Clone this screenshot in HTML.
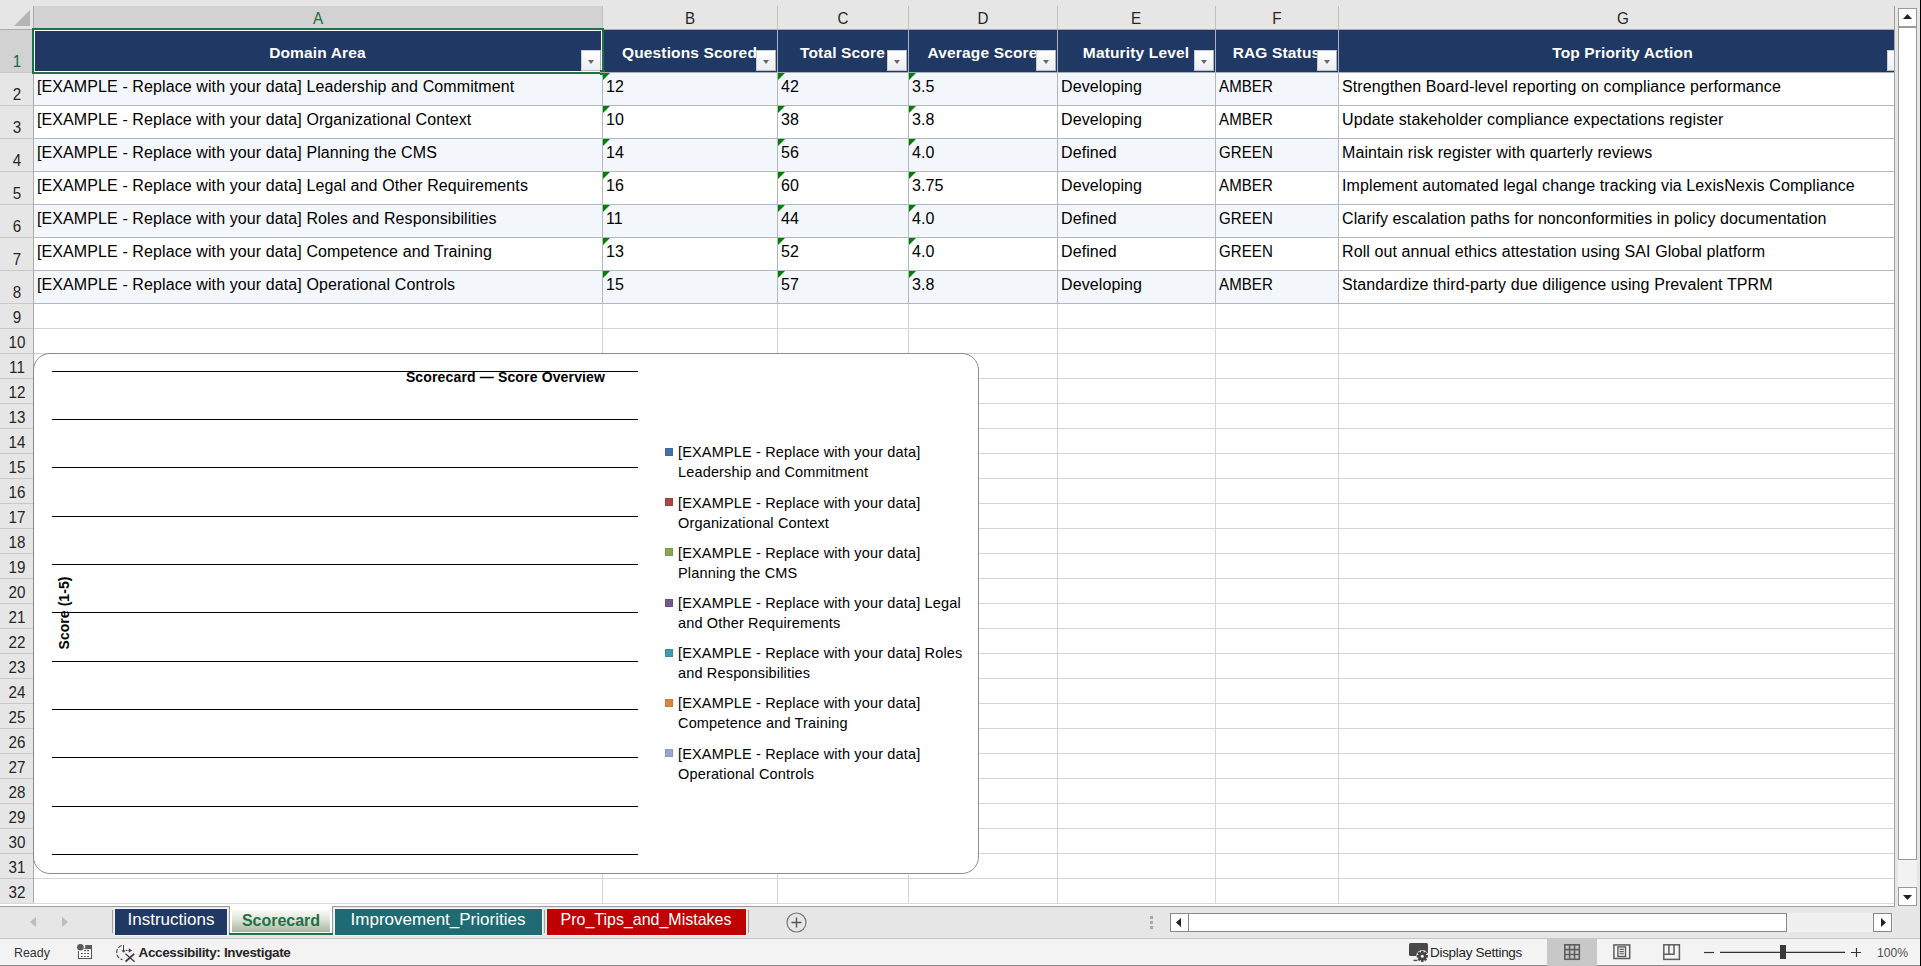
<!DOCTYPE html>
<html><head><meta charset="utf-8"><style>
html,body{margin:0;padding:0;}
body{width:1921px;height:966px;overflow:hidden;position:relative;font-family:"Liberation Sans",sans-serif;background:#fff;}
.r,.t{position:absolute;}
.t{white-space:nowrap;}
.dd{background:linear-gradient(#fff,#ECEEF2);border:1px solid #C9CCD2;border-right-color:#A9B0BC;border-bottom-color:#B9BEC8;box-sizing:border-box;}
.dd:after{content:"";position:absolute;left:5.5px;top:8.5px;border-left:3.7px solid transparent;border-right:3.7px solid transparent;border-top:4.2px solid #666;}
</style></head><body>
<div class="r" style="left:0px;top:0px;width:1921px;height:966px;background:#fff;"></div>
<div class="r" style="left:0px;top:0px;width:1921px;height:29px;background:#E6E6E6;"></div>
<div class="r" style="left:33px;top:6px;width:569px;height:23px;background:#D2D2D2;"></div>
<div class="r" style="left:0px;top:29px;width:33px;height:874px;background:#E6E6E6;"></div>
<div class="r" style="left:0px;top:30px;width:33px;height:42px;background:#D2D2D2;"></div>
<svg class="r" style="left:0;top:0" width="33" height="29"><polygon points="30,10 30,26 14,26" fill="#B4B4B4"/></svg>
<div class="r" style="left:602px;top:6px;width:1px;height:23px;background:#BFBFBF;"></div>
<div class="r" style="left:777px;top:6px;width:1px;height:23px;background:#BFBFBF;"></div>
<div class="r" style="left:908px;top:6px;width:1px;height:23px;background:#BFBFBF;"></div>
<div class="r" style="left:1057px;top:6px;width:1px;height:23px;background:#BFBFBF;"></div>
<div class="r" style="left:1215px;top:6px;width:1px;height:23px;background:#BFBFBF;"></div>
<div class="r" style="left:1338px;top:6px;width:1px;height:23px;background:#BFBFBF;"></div>
<div class="r" style="left:33px;top:6px;width:1px;height:23px;background:#ABABAB;"></div>
<div class="r" style="left:0px;top:29px;width:1894px;height:1px;background:#ABABAB;"></div>
<div class="t" style="left:-82.5px;width:800px;text-align:center;top:9.07px;font-size:16.5px;line-height:18.43px;color:#1E6B3A;transform:scaleX(0.92);transform-origin:50% 0;">A</div>
<div class="t" style="left:289.5px;width:800px;text-align:center;top:9.07px;font-size:16.5px;line-height:18.43px;color:#262626;transform:scaleX(0.92);transform-origin:50% 0;">B</div>
<div class="t" style="left:442.5px;width:800px;text-align:center;top:9.07px;font-size:16.5px;line-height:18.43px;color:#262626;transform:scaleX(0.92);transform-origin:50% 0;">C</div>
<div class="t" style="left:582.5px;width:800px;text-align:center;top:9.07px;font-size:16.5px;line-height:18.43px;color:#262626;transform:scaleX(0.92);transform-origin:50% 0;">D</div>
<div class="t" style="left:736.0px;width:800px;text-align:center;top:9.07px;font-size:16.5px;line-height:18.43px;color:#262626;transform:scaleX(0.92);transform-origin:50% 0;">E</div>
<div class="t" style="left:876.5px;width:800px;text-align:center;top:9.07px;font-size:16.5px;line-height:18.43px;color:#262626;transform:scaleX(0.92);transform-origin:50% 0;">F</div>
<div class="t" style="left:1222.5px;width:800px;text-align:center;top:9.07px;font-size:16.5px;line-height:18.43px;color:#262626;transform:scaleX(0.92);transform-origin:50% 0;">G</div>
<div class="r" style="left:33px;top:29px;width:1px;height:874px;background:#ABABAB;"></div>
<div class="t" style="left:-383px;width:800px;text-align:center;top:52.47px;font-size:16.5px;line-height:18.43px;color:#1E6B3A;transform:scaleX(0.92);transform-origin:50% 0;">1</div>
<div class="r" style="left:0px;top:72px;width:33px;height:1px;background:#C8C8C8;"></div>
<div class="t" style="left:-383px;width:800px;text-align:center;top:85.47px;font-size:16.5px;line-height:18.43px;color:#262626;transform:scaleX(0.92);transform-origin:50% 0;">2</div>
<div class="r" style="left:0px;top:105px;width:33px;height:1px;background:#C8C8C8;"></div>
<div class="t" style="left:-383px;width:800px;text-align:center;top:118.47px;font-size:16.5px;line-height:18.43px;color:#262626;transform:scaleX(0.92);transform-origin:50% 0;">3</div>
<div class="r" style="left:0px;top:138px;width:33px;height:1px;background:#C8C8C8;"></div>
<div class="t" style="left:-383px;width:800px;text-align:center;top:151.47px;font-size:16.5px;line-height:18.43px;color:#262626;transform:scaleX(0.92);transform-origin:50% 0;">4</div>
<div class="r" style="left:0px;top:171px;width:33px;height:1px;background:#C8C8C8;"></div>
<div class="t" style="left:-383px;width:800px;text-align:center;top:184.47px;font-size:16.5px;line-height:18.43px;color:#262626;transform:scaleX(0.92);transform-origin:50% 0;">5</div>
<div class="r" style="left:0px;top:204px;width:33px;height:1px;background:#C8C8C8;"></div>
<div class="t" style="left:-383px;width:800px;text-align:center;top:217.47px;font-size:16.5px;line-height:18.43px;color:#262626;transform:scaleX(0.92);transform-origin:50% 0;">6</div>
<div class="r" style="left:0px;top:237px;width:33px;height:1px;background:#C8C8C8;"></div>
<div class="t" style="left:-383px;width:800px;text-align:center;top:250.47px;font-size:16.5px;line-height:18.43px;color:#262626;transform:scaleX(0.92);transform-origin:50% 0;">7</div>
<div class="r" style="left:0px;top:270px;width:33px;height:1px;background:#C8C8C8;"></div>
<div class="t" style="left:-383px;width:800px;text-align:center;top:283.47px;font-size:16.5px;line-height:18.43px;color:#262626;transform:scaleX(0.92);transform-origin:50% 0;">8</div>
<div class="r" style="left:0px;top:303px;width:33px;height:1px;background:#C8C8C8;"></div>
<div class="t" style="left:-383px;width:800px;text-align:center;top:308.47px;font-size:16.5px;line-height:18.43px;color:#262626;transform:scaleX(0.92);transform-origin:50% 0;">9</div>
<div class="r" style="left:0px;top:328px;width:33px;height:1px;background:#C8C8C8;"></div>
<div class="t" style="left:-383px;width:800px;text-align:center;top:333.47px;font-size:16.5px;line-height:18.43px;color:#262626;transform:scaleX(0.92);transform-origin:50% 0;">10</div>
<div class="r" style="left:0px;top:353px;width:33px;height:1px;background:#C8C8C8;"></div>
<div class="t" style="left:-383px;width:800px;text-align:center;top:358.47px;font-size:16.5px;line-height:18.43px;color:#262626;transform:scaleX(0.92);transform-origin:50% 0;">11</div>
<div class="r" style="left:0px;top:378px;width:33px;height:1px;background:#C8C8C8;"></div>
<div class="t" style="left:-383px;width:800px;text-align:center;top:383.47px;font-size:16.5px;line-height:18.43px;color:#262626;transform:scaleX(0.92);transform-origin:50% 0;">12</div>
<div class="r" style="left:0px;top:403px;width:33px;height:1px;background:#C8C8C8;"></div>
<div class="t" style="left:-383px;width:800px;text-align:center;top:408.47px;font-size:16.5px;line-height:18.43px;color:#262626;transform:scaleX(0.92);transform-origin:50% 0;">13</div>
<div class="r" style="left:0px;top:428px;width:33px;height:1px;background:#C8C8C8;"></div>
<div class="t" style="left:-383px;width:800px;text-align:center;top:433.47px;font-size:16.5px;line-height:18.43px;color:#262626;transform:scaleX(0.92);transform-origin:50% 0;">14</div>
<div class="r" style="left:0px;top:453px;width:33px;height:1px;background:#C8C8C8;"></div>
<div class="t" style="left:-383px;width:800px;text-align:center;top:458.47px;font-size:16.5px;line-height:18.43px;color:#262626;transform:scaleX(0.92);transform-origin:50% 0;">15</div>
<div class="r" style="left:0px;top:478px;width:33px;height:1px;background:#C8C8C8;"></div>
<div class="t" style="left:-383px;width:800px;text-align:center;top:483.47px;font-size:16.5px;line-height:18.43px;color:#262626;transform:scaleX(0.92);transform-origin:50% 0;">16</div>
<div class="r" style="left:0px;top:503px;width:33px;height:1px;background:#C8C8C8;"></div>
<div class="t" style="left:-383px;width:800px;text-align:center;top:508.47px;font-size:16.5px;line-height:18.43px;color:#262626;transform:scaleX(0.92);transform-origin:50% 0;">17</div>
<div class="r" style="left:0px;top:528px;width:33px;height:1px;background:#C8C8C8;"></div>
<div class="t" style="left:-383px;width:800px;text-align:center;top:533.47px;font-size:16.5px;line-height:18.43px;color:#262626;transform:scaleX(0.92);transform-origin:50% 0;">18</div>
<div class="r" style="left:0px;top:553px;width:33px;height:1px;background:#C8C8C8;"></div>
<div class="t" style="left:-383px;width:800px;text-align:center;top:558.47px;font-size:16.5px;line-height:18.43px;color:#262626;transform:scaleX(0.92);transform-origin:50% 0;">19</div>
<div class="r" style="left:0px;top:578px;width:33px;height:1px;background:#C8C8C8;"></div>
<div class="t" style="left:-383px;width:800px;text-align:center;top:583.47px;font-size:16.5px;line-height:18.43px;color:#262626;transform:scaleX(0.92);transform-origin:50% 0;">20</div>
<div class="r" style="left:0px;top:603px;width:33px;height:1px;background:#C8C8C8;"></div>
<div class="t" style="left:-383px;width:800px;text-align:center;top:608.47px;font-size:16.5px;line-height:18.43px;color:#262626;transform:scaleX(0.92);transform-origin:50% 0;">21</div>
<div class="r" style="left:0px;top:628px;width:33px;height:1px;background:#C8C8C8;"></div>
<div class="t" style="left:-383px;width:800px;text-align:center;top:633.47px;font-size:16.5px;line-height:18.43px;color:#262626;transform:scaleX(0.92);transform-origin:50% 0;">22</div>
<div class="r" style="left:0px;top:653px;width:33px;height:1px;background:#C8C8C8;"></div>
<div class="t" style="left:-383px;width:800px;text-align:center;top:658.47px;font-size:16.5px;line-height:18.43px;color:#262626;transform:scaleX(0.92);transform-origin:50% 0;">23</div>
<div class="r" style="left:0px;top:678px;width:33px;height:1px;background:#C8C8C8;"></div>
<div class="t" style="left:-383px;width:800px;text-align:center;top:683.47px;font-size:16.5px;line-height:18.43px;color:#262626;transform:scaleX(0.92);transform-origin:50% 0;">24</div>
<div class="r" style="left:0px;top:703px;width:33px;height:1px;background:#C8C8C8;"></div>
<div class="t" style="left:-383px;width:800px;text-align:center;top:708.47px;font-size:16.5px;line-height:18.43px;color:#262626;transform:scaleX(0.92);transform-origin:50% 0;">25</div>
<div class="r" style="left:0px;top:728px;width:33px;height:1px;background:#C8C8C8;"></div>
<div class="t" style="left:-383px;width:800px;text-align:center;top:733.47px;font-size:16.5px;line-height:18.43px;color:#262626;transform:scaleX(0.92);transform-origin:50% 0;">26</div>
<div class="r" style="left:0px;top:753px;width:33px;height:1px;background:#C8C8C8;"></div>
<div class="t" style="left:-383px;width:800px;text-align:center;top:758.47px;font-size:16.5px;line-height:18.43px;color:#262626;transform:scaleX(0.92);transform-origin:50% 0;">27</div>
<div class="r" style="left:0px;top:778px;width:33px;height:1px;background:#C8C8C8;"></div>
<div class="t" style="left:-383px;width:800px;text-align:center;top:783.47px;font-size:16.5px;line-height:18.43px;color:#262626;transform:scaleX(0.92);transform-origin:50% 0;">28</div>
<div class="r" style="left:0px;top:803px;width:33px;height:1px;background:#C8C8C8;"></div>
<div class="t" style="left:-383px;width:800px;text-align:center;top:808.47px;font-size:16.5px;line-height:18.43px;color:#262626;transform:scaleX(0.92);transform-origin:50% 0;">29</div>
<div class="r" style="left:0px;top:828px;width:33px;height:1px;background:#C8C8C8;"></div>
<div class="t" style="left:-383px;width:800px;text-align:center;top:833.47px;font-size:16.5px;line-height:18.43px;color:#262626;transform:scaleX(0.92);transform-origin:50% 0;">30</div>
<div class="r" style="left:0px;top:853px;width:33px;height:1px;background:#C8C8C8;"></div>
<div class="t" style="left:-383px;width:800px;text-align:center;top:858.47px;font-size:16.5px;line-height:18.43px;color:#262626;transform:scaleX(0.92);transform-origin:50% 0;">31</div>
<div class="r" style="left:0px;top:878px;width:33px;height:1px;background:#C8C8C8;"></div>
<div class="t" style="left:-383px;width:800px;text-align:center;top:883.47px;font-size:16.5px;line-height:18.43px;color:#262626;transform:scaleX(0.92);transform-origin:50% 0;">32</div>
<div class="r" style="left:0px;top:903px;width:33px;height:1px;background:#C8C8C8;"></div>
<div class="r" style="left:34px;top:328px;width:1860px;height:1px;background:#D4D4D4;"></div>
<div class="r" style="left:34px;top:353px;width:1860px;height:1px;background:#D4D4D4;"></div>
<div class="r" style="left:34px;top:378px;width:1860px;height:1px;background:#D4D4D4;"></div>
<div class="r" style="left:34px;top:403px;width:1860px;height:1px;background:#D4D4D4;"></div>
<div class="r" style="left:34px;top:428px;width:1860px;height:1px;background:#D4D4D4;"></div>
<div class="r" style="left:34px;top:453px;width:1860px;height:1px;background:#D4D4D4;"></div>
<div class="r" style="left:34px;top:478px;width:1860px;height:1px;background:#D4D4D4;"></div>
<div class="r" style="left:34px;top:503px;width:1860px;height:1px;background:#D4D4D4;"></div>
<div class="r" style="left:34px;top:528px;width:1860px;height:1px;background:#D4D4D4;"></div>
<div class="r" style="left:34px;top:553px;width:1860px;height:1px;background:#D4D4D4;"></div>
<div class="r" style="left:34px;top:578px;width:1860px;height:1px;background:#D4D4D4;"></div>
<div class="r" style="left:34px;top:603px;width:1860px;height:1px;background:#D4D4D4;"></div>
<div class="r" style="left:34px;top:628px;width:1860px;height:1px;background:#D4D4D4;"></div>
<div class="r" style="left:34px;top:653px;width:1860px;height:1px;background:#D4D4D4;"></div>
<div class="r" style="left:34px;top:678px;width:1860px;height:1px;background:#D4D4D4;"></div>
<div class="r" style="left:34px;top:703px;width:1860px;height:1px;background:#D4D4D4;"></div>
<div class="r" style="left:34px;top:728px;width:1860px;height:1px;background:#D4D4D4;"></div>
<div class="r" style="left:34px;top:753px;width:1860px;height:1px;background:#D4D4D4;"></div>
<div class="r" style="left:34px;top:778px;width:1860px;height:1px;background:#D4D4D4;"></div>
<div class="r" style="left:34px;top:803px;width:1860px;height:1px;background:#D4D4D4;"></div>
<div class="r" style="left:34px;top:828px;width:1860px;height:1px;background:#D4D4D4;"></div>
<div class="r" style="left:34px;top:853px;width:1860px;height:1px;background:#D4D4D4;"></div>
<div class="r" style="left:34px;top:878px;width:1860px;height:1px;background:#D4D4D4;"></div>
<div class="r" style="left:34px;top:903px;width:1860px;height:1px;background:#D4D4D4;"></div>
<div class="r" style="left:602px;top:303px;width:1px;height:600px;background:#D4D4D4;"></div>
<div class="r" style="left:777px;top:303px;width:1px;height:600px;background:#D4D4D4;"></div>
<div class="r" style="left:908px;top:303px;width:1px;height:600px;background:#D4D4D4;"></div>
<div class="r" style="left:1057px;top:303px;width:1px;height:600px;background:#D4D4D4;"></div>
<div class="r" style="left:1215px;top:303px;width:1px;height:600px;background:#D4D4D4;"></div>
<div class="r" style="left:1338px;top:303px;width:1px;height:600px;background:#D4D4D4;"></div>
<div class="r" style="left:34px;top:30px;width:1860px;height:42px;background:#203864;"></div>
<div class="r" style="left:34px;top:72px;width:1860px;height:1px;background:#A6AEBB;"></div>
<div class="r" style="left:602px;top:30px;width:1px;height:42px;background:#A9B1BE;"></div>
<div class="r" style="left:777px;top:30px;width:1px;height:42px;background:#A9B1BE;"></div>
<div class="r" style="left:908px;top:30px;width:1px;height:42px;background:#A9B1BE;"></div>
<div class="r" style="left:1057px;top:30px;width:1px;height:42px;background:#A9B1BE;"></div>
<div class="r" style="left:1215px;top:30px;width:1px;height:42px;background:#A9B1BE;"></div>
<div class="r" style="left:1338px;top:30px;width:1px;height:42px;background:#A9B1BE;"></div>
<div class="r" style="left:34px;top:73px;width:1304px;height:32px;background:#F3F6FB;"></div>
<div class="r" style="left:34px;top:105px;width:1860px;height:1px;background:#B0B8C4;"></div>
<div class="t" style="left:37px;top:77.52px;font-size:16px;line-height:17.87px;color:#000;letter-spacing:0.1px;">[EXAMPLE - Replace with your data] Leadership and Commitment</div>
<div class="t" style="left:606px;top:77.52px;font-size:16px;line-height:17.87px;color:#000;letter-spacing:0.1px;">12</div>
<svg class="r" style="left:603px;top:73px" width="8" height="8"><polygon points="0,0 7,0 0,7" fill="#008000"/></svg>
<div class="t" style="left:781px;top:77.52px;font-size:16px;line-height:17.87px;color:#000;letter-spacing:0.1px;">42</div>
<svg class="r" style="left:778px;top:73px" width="8" height="8"><polygon points="0,0 7,0 0,7" fill="#008000"/></svg>
<div class="t" style="left:912px;top:77.52px;font-size:16px;line-height:17.87px;color:#000;letter-spacing:0.1px;">3.5</div>
<svg class="r" style="left:909px;top:73px" width="8" height="8"><polygon points="0,0 7,0 0,7" fill="#008000"/></svg>
<div class="t" style="left:1061px;top:77.52px;font-size:16px;line-height:17.87px;color:#000;letter-spacing:0.1px;">Developing</div>
<div class="t" style="left:1219px;top:77.52px;font-size:16px;line-height:17.87px;color:#000;letter-spacing:0.1px;transform:scaleX(0.94);transform-origin:0 0;">AMBER</div>
<div class="t" style="left:1342px;top:77.52px;font-size:16px;line-height:17.87px;color:#000;letter-spacing:0.1px;">Strengthen Board-level reporting on compliance performance</div>
<div class="r" style="left:34px;top:106px;width:1304px;height:32px;background:#FFFFFF;"></div>
<div class="r" style="left:34px;top:138px;width:1860px;height:1px;background:#B0B8C4;"></div>
<div class="t" style="left:37px;top:110.52px;font-size:16px;line-height:17.87px;color:#000;letter-spacing:0.1px;">[EXAMPLE - Replace with your data] Organizational Context</div>
<div class="t" style="left:606px;top:110.52px;font-size:16px;line-height:17.87px;color:#000;letter-spacing:0.1px;">10</div>
<svg class="r" style="left:603px;top:106px" width="8" height="8"><polygon points="0,0 7,0 0,7" fill="#008000"/></svg>
<div class="t" style="left:781px;top:110.52px;font-size:16px;line-height:17.87px;color:#000;letter-spacing:0.1px;">38</div>
<svg class="r" style="left:778px;top:106px" width="8" height="8"><polygon points="0,0 7,0 0,7" fill="#008000"/></svg>
<div class="t" style="left:912px;top:110.52px;font-size:16px;line-height:17.87px;color:#000;letter-spacing:0.1px;">3.8</div>
<svg class="r" style="left:909px;top:106px" width="8" height="8"><polygon points="0,0 7,0 0,7" fill="#008000"/></svg>
<div class="t" style="left:1061px;top:110.52px;font-size:16px;line-height:17.87px;color:#000;letter-spacing:0.1px;">Developing</div>
<div class="t" style="left:1219px;top:110.52px;font-size:16px;line-height:17.87px;color:#000;letter-spacing:0.1px;transform:scaleX(0.94);transform-origin:0 0;">AMBER</div>
<div class="t" style="left:1342px;top:110.52px;font-size:16px;line-height:17.87px;color:#000;letter-spacing:0.1px;">Update stakeholder compliance expectations register</div>
<div class="r" style="left:34px;top:139px;width:1304px;height:32px;background:#F3F6FB;"></div>
<div class="r" style="left:34px;top:171px;width:1860px;height:1px;background:#B0B8C4;"></div>
<div class="t" style="left:37px;top:143.52px;font-size:16px;line-height:17.87px;color:#000;letter-spacing:0.1px;">[EXAMPLE - Replace with your data] Planning the CMS</div>
<div class="t" style="left:606px;top:143.52px;font-size:16px;line-height:17.87px;color:#000;letter-spacing:0.1px;">14</div>
<svg class="r" style="left:603px;top:139px" width="8" height="8"><polygon points="0,0 7,0 0,7" fill="#008000"/></svg>
<div class="t" style="left:781px;top:143.52px;font-size:16px;line-height:17.87px;color:#000;letter-spacing:0.1px;">56</div>
<svg class="r" style="left:778px;top:139px" width="8" height="8"><polygon points="0,0 7,0 0,7" fill="#008000"/></svg>
<div class="t" style="left:912px;top:143.52px;font-size:16px;line-height:17.87px;color:#000;letter-spacing:0.1px;">4.0</div>
<svg class="r" style="left:909px;top:139px" width="8" height="8"><polygon points="0,0 7,0 0,7" fill="#008000"/></svg>
<div class="t" style="left:1061px;top:143.52px;font-size:16px;line-height:17.87px;color:#000;letter-spacing:0.1px;">Defined</div>
<div class="t" style="left:1219px;top:143.52px;font-size:16px;line-height:17.87px;color:#000;letter-spacing:0.1px;transform:scaleX(0.94);transform-origin:0 0;">GREEN</div>
<div class="t" style="left:1342px;top:143.52px;font-size:16px;line-height:17.87px;color:#000;letter-spacing:0.1px;">Maintain risk register with quarterly reviews</div>
<div class="r" style="left:34px;top:172px;width:1304px;height:32px;background:#FFFFFF;"></div>
<div class="r" style="left:34px;top:204px;width:1860px;height:1px;background:#B0B8C4;"></div>
<div class="t" style="left:37px;top:176.52px;font-size:16px;line-height:17.87px;color:#000;letter-spacing:0.1px;">[EXAMPLE - Replace with your data] Legal and Other Requirements</div>
<div class="t" style="left:606px;top:176.52px;font-size:16px;line-height:17.87px;color:#000;letter-spacing:0.1px;">16</div>
<svg class="r" style="left:603px;top:172px" width="8" height="8"><polygon points="0,0 7,0 0,7" fill="#008000"/></svg>
<div class="t" style="left:781px;top:176.52px;font-size:16px;line-height:17.87px;color:#000;letter-spacing:0.1px;">60</div>
<svg class="r" style="left:778px;top:172px" width="8" height="8"><polygon points="0,0 7,0 0,7" fill="#008000"/></svg>
<div class="t" style="left:912px;top:176.52px;font-size:16px;line-height:17.87px;color:#000;letter-spacing:0.1px;">3.75</div>
<svg class="r" style="left:909px;top:172px" width="8" height="8"><polygon points="0,0 7,0 0,7" fill="#008000"/></svg>
<div class="t" style="left:1061px;top:176.52px;font-size:16px;line-height:17.87px;color:#000;letter-spacing:0.1px;">Developing</div>
<div class="t" style="left:1219px;top:176.52px;font-size:16px;line-height:17.87px;color:#000;letter-spacing:0.1px;transform:scaleX(0.94);transform-origin:0 0;">AMBER</div>
<div class="t" style="left:1342px;top:176.52px;font-size:16px;line-height:17.87px;color:#000;letter-spacing:0.1px;">Implement automated legal change tracking via LexisNexis Compliance</div>
<div class="r" style="left:34px;top:205px;width:1304px;height:32px;background:#F3F6FB;"></div>
<div class="r" style="left:34px;top:237px;width:1860px;height:1px;background:#B0B8C4;"></div>
<div class="t" style="left:37px;top:209.52px;font-size:16px;line-height:17.87px;color:#000;letter-spacing:0.1px;">[EXAMPLE - Replace with your data] Roles and Responsibilities</div>
<div class="t" style="left:606px;top:209.52px;font-size:16px;line-height:17.87px;color:#000;letter-spacing:0.1px;">11</div>
<svg class="r" style="left:603px;top:205px" width="8" height="8"><polygon points="0,0 7,0 0,7" fill="#008000"/></svg>
<div class="t" style="left:781px;top:209.52px;font-size:16px;line-height:17.87px;color:#000;letter-spacing:0.1px;">44</div>
<svg class="r" style="left:778px;top:205px" width="8" height="8"><polygon points="0,0 7,0 0,7" fill="#008000"/></svg>
<div class="t" style="left:912px;top:209.52px;font-size:16px;line-height:17.87px;color:#000;letter-spacing:0.1px;">4.0</div>
<svg class="r" style="left:909px;top:205px" width="8" height="8"><polygon points="0,0 7,0 0,7" fill="#008000"/></svg>
<div class="t" style="left:1061px;top:209.52px;font-size:16px;line-height:17.87px;color:#000;letter-spacing:0.1px;">Defined</div>
<div class="t" style="left:1219px;top:209.52px;font-size:16px;line-height:17.87px;color:#000;letter-spacing:0.1px;transform:scaleX(0.94);transform-origin:0 0;">GREEN</div>
<div class="t" style="left:1342px;top:209.52px;font-size:16px;line-height:17.87px;color:#000;letter-spacing:0.1px;">Clarify escalation paths for nonconformities in policy documentation</div>
<div class="r" style="left:34px;top:238px;width:1304px;height:32px;background:#FFFFFF;"></div>
<div class="r" style="left:34px;top:270px;width:1860px;height:1px;background:#B0B8C4;"></div>
<div class="t" style="left:37px;top:242.52px;font-size:16px;line-height:17.87px;color:#000;letter-spacing:0.1px;">[EXAMPLE - Replace with your data] Competence and Training</div>
<div class="t" style="left:606px;top:242.52px;font-size:16px;line-height:17.87px;color:#000;letter-spacing:0.1px;">13</div>
<svg class="r" style="left:603px;top:238px" width="8" height="8"><polygon points="0,0 7,0 0,7" fill="#008000"/></svg>
<div class="t" style="left:781px;top:242.52px;font-size:16px;line-height:17.87px;color:#000;letter-spacing:0.1px;">52</div>
<svg class="r" style="left:778px;top:238px" width="8" height="8"><polygon points="0,0 7,0 0,7" fill="#008000"/></svg>
<div class="t" style="left:912px;top:242.52px;font-size:16px;line-height:17.87px;color:#000;letter-spacing:0.1px;">4.0</div>
<svg class="r" style="left:909px;top:238px" width="8" height="8"><polygon points="0,0 7,0 0,7" fill="#008000"/></svg>
<div class="t" style="left:1061px;top:242.52px;font-size:16px;line-height:17.87px;color:#000;letter-spacing:0.1px;">Defined</div>
<div class="t" style="left:1219px;top:242.52px;font-size:16px;line-height:17.87px;color:#000;letter-spacing:0.1px;transform:scaleX(0.94);transform-origin:0 0;">GREEN</div>
<div class="t" style="left:1342px;top:242.52px;font-size:16px;line-height:17.87px;color:#000;letter-spacing:0.1px;">Roll out annual ethics attestation using SAI Global platform</div>
<div class="r" style="left:34px;top:271px;width:1304px;height:32px;background:#F3F6FB;"></div>
<div class="r" style="left:34px;top:303px;width:1860px;height:1px;background:#B0B8C4;"></div>
<div class="t" style="left:37px;top:275.52px;font-size:16px;line-height:17.87px;color:#000;letter-spacing:0.1px;">[EXAMPLE - Replace with your data] Operational Controls</div>
<div class="t" style="left:606px;top:275.52px;font-size:16px;line-height:17.87px;color:#000;letter-spacing:0.1px;">15</div>
<svg class="r" style="left:603px;top:271px" width="8" height="8"><polygon points="0,0 7,0 0,7" fill="#008000"/></svg>
<div class="t" style="left:781px;top:275.52px;font-size:16px;line-height:17.87px;color:#000;letter-spacing:0.1px;">57</div>
<svg class="r" style="left:778px;top:271px" width="8" height="8"><polygon points="0,0 7,0 0,7" fill="#008000"/></svg>
<div class="t" style="left:912px;top:275.52px;font-size:16px;line-height:17.87px;color:#000;letter-spacing:0.1px;">3.8</div>
<svg class="r" style="left:909px;top:271px" width="8" height="8"><polygon points="0,0 7,0 0,7" fill="#008000"/></svg>
<div class="t" style="left:1061px;top:275.52px;font-size:16px;line-height:17.87px;color:#000;letter-spacing:0.1px;">Developing</div>
<div class="t" style="left:1219px;top:275.52px;font-size:16px;line-height:17.87px;color:#000;letter-spacing:0.1px;transform:scaleX(0.94);transform-origin:0 0;">AMBER</div>
<div class="t" style="left:1342px;top:275.52px;font-size:16px;line-height:17.87px;color:#000;letter-spacing:0.1px;">Standardize third-party due diligence using Prevalent TPRM</div>
<div class="r" style="left:602px;top:72px;width:1px;height:231px;background:#B0B8C4;"></div>
<div class="r" style="left:777px;top:72px;width:1px;height:231px;background:#B0B8C4;"></div>
<div class="r" style="left:908px;top:72px;width:1px;height:231px;background:#B0B8C4;"></div>
<div class="r" style="left:1057px;top:72px;width:1px;height:231px;background:#B0B8C4;"></div>
<div class="r" style="left:1215px;top:72px;width:1px;height:231px;background:#B0B8C4;"></div>
<div class="r" style="left:1338px;top:72px;width:1px;height:231px;background:#B0B8C4;"></div>
<div class="r" style="left:1894px;top:29px;width:1px;height:274px;background:#B0B8C4;"></div>
<div class="t" style="left:-82.5px;width:800px;text-align:center;top:43.97px;font-size:15.5px;line-height:17.31px;color:#fff;font-weight:bold;letter-spacing:0.15px;">Domain Area</div>
<div class="t" style="left:289.5px;width:800px;text-align:center;top:43.97px;font-size:15.5px;line-height:17.31px;color:#fff;font-weight:bold;letter-spacing:0.15px;">Questions Scored</div>
<div class="t" style="left:442.5px;width:800px;text-align:center;top:43.97px;font-size:15.5px;line-height:17.31px;color:#fff;font-weight:bold;letter-spacing:0.15px;">Total Score</div>
<div class="t" style="left:582.5px;width:800px;text-align:center;top:43.97px;font-size:15.5px;line-height:17.31px;color:#fff;font-weight:bold;letter-spacing:0.15px;">Average Score</div>
<div class="t" style="left:736.0px;width:800px;text-align:center;top:43.97px;font-size:15.5px;line-height:17.31px;color:#fff;font-weight:bold;letter-spacing:0.15px;">Maturity Level</div>
<div class="t" style="left:876.5px;width:800px;text-align:center;top:43.97px;font-size:15.5px;line-height:17.31px;color:#fff;font-weight:bold;letter-spacing:0.15px;">RAG Status</div>
<div class="t" style="left:1222.5px;width:800px;text-align:center;top:43.97px;font-size:15.5px;line-height:17.31px;color:#fff;font-weight:bold;letter-spacing:0.15px;">Top Priority Action</div>
<div class="r dd" style="left:581px;top:50px;width:20px;height:21px"></div>
<div class="r dd" style="left:756px;top:50px;width:20px;height:21px"></div>
<div class="r dd" style="left:887px;top:50px;width:20px;height:21px"></div>
<div class="r dd" style="left:1036px;top:50px;width:20px;height:21px"></div>
<div class="r dd" style="left:1194px;top:50px;width:20px;height:21px"></div>
<div class="r dd" style="left:1317px;top:50px;width:20px;height:21px"></div>
<div class="r dd" style="left:1887px;top:50px;width:20px;height:21px"></div>
<div class="r" style="left:32px;top:28px;width:572px;height:46px;border:2px solid #1E7145;box-sizing:border-box;"></div>
<div class="r" style="left:34px;top:30px;width:568px;height:42px;border:1px solid #fff;box-sizing:border-box;"></div>
<div class="r" style="left:600px;top:70px;width:5px;height:5px;background:#1E7145;"></div>
<div class="r" style="left:600px;top:72px;width:5px;height:1px;background:#A6A6A6;"></div>
<div class="r" style="left:33px;top:353px;width:946px;height:521px;background:#fff;border:1px solid #8C8C8C;border-radius:17px;box-sizing:border-box;"></div>
<div class="r" style="left:52px;top:371px;width:586px;height:1px;background:#000;"></div>
<div class="r" style="left:52px;top:419px;width:586px;height:1px;background:#000;"></div>
<div class="r" style="left:52px;top:467px;width:586px;height:1px;background:#000;"></div>
<div class="r" style="left:52px;top:516px;width:586px;height:1px;background:#000;"></div>
<div class="r" style="left:52px;top:564px;width:586px;height:1px;background:#000;"></div>
<div class="r" style="left:52px;top:612px;width:586px;height:1px;background:#000;"></div>
<div class="r" style="left:52px;top:661px;width:586px;height:1px;background:#000;"></div>
<div class="r" style="left:52px;top:709px;width:586px;height:1px;background:#000;"></div>
<div class="r" style="left:52px;top:757px;width:586px;height:1px;background:#000;"></div>
<div class="r" style="left:52px;top:806px;width:586px;height:1px;background:#000;"></div>
<div class="r" style="left:52px;top:854px;width:586px;height:1px;background:#000;"></div>
<div class="t" style="left:105.5px;width:800px;text-align:center;top:369.73px;font-size:14px;line-height:15.64px;color:#000;font-weight:bold;letter-spacing:0.15px;">Scorecard — Score Overview</div>
<div class="t" style="left:4px;top:603.7px;width:120px;height:18px;line-height:18px;text-align:center;font-size:14px;font-weight:bold;letter-spacing:0.05px;transform:rotate(-90deg);">Score (1-5)</div>
<div class="r" style="left:665px;top:448px;width:8px;height:8px;background:#4573A7;box-shadow:inset 0 0 0 1px rgba(0,0,0,0.08);"></div>
<div class="t" style="left:678px;top:444.48px;font-size:14.5px;line-height:16.20px;color:#000;letter-spacing:0.16px;">[EXAMPLE - Replace with your data]</div>
<div class="t" style="left:678px;top:464.48px;font-size:14.5px;line-height:16.20px;color:#000;letter-spacing:0.16px;">Leadership and Commitment</div>
<div class="r" style="left:665px;top:498px;width:8px;height:8px;background:#AA4643;box-shadow:inset 0 0 0 1px rgba(0,0,0,0.08);"></div>
<div class="t" style="left:678px;top:494.68px;font-size:14.5px;line-height:16.20px;color:#000;letter-spacing:0.16px;">[EXAMPLE - Replace with your data]</div>
<div class="t" style="left:678px;top:514.68px;font-size:14.5px;line-height:16.20px;color:#000;letter-spacing:0.16px;">Organizational Context</div>
<div class="r" style="left:665px;top:548px;width:8px;height:8px;background:#89A54E;box-shadow:inset 0 0 0 1px rgba(0,0,0,0.08);"></div>
<div class="t" style="left:678px;top:544.88px;font-size:14.5px;line-height:16.20px;color:#000;letter-spacing:0.16px;">[EXAMPLE - Replace with your data]</div>
<div class="t" style="left:678px;top:564.88px;font-size:14.5px;line-height:16.20px;color:#000;letter-spacing:0.16px;">Planning the CMS</div>
<div class="r" style="left:665px;top:599px;width:8px;height:8px;background:#71588F;box-shadow:inset 0 0 0 1px rgba(0,0,0,0.08);"></div>
<div class="t" style="left:678px;top:595.08px;font-size:14.5px;line-height:16.20px;color:#000;letter-spacing:0.16px;">[EXAMPLE - Replace with your data] Legal</div>
<div class="t" style="left:678px;top:615.08px;font-size:14.5px;line-height:16.20px;color:#000;letter-spacing:0.16px;">and Other Requirements</div>
<div class="r" style="left:665px;top:649px;width:8px;height:8px;background:#4198AF;box-shadow:inset 0 0 0 1px rgba(0,0,0,0.08);"></div>
<div class="t" style="left:678px;top:645.28px;font-size:14.5px;line-height:16.20px;color:#000;letter-spacing:0.16px;">[EXAMPLE - Replace with your data] Roles</div>
<div class="t" style="left:678px;top:665.28px;font-size:14.5px;line-height:16.20px;color:#000;letter-spacing:0.16px;">and Responsibilities</div>
<div class="r" style="left:665px;top:699px;width:8px;height:8px;background:#DB843D;box-shadow:inset 0 0 0 1px rgba(0,0,0,0.08);"></div>
<div class="t" style="left:678px;top:695.48px;font-size:14.5px;line-height:16.20px;color:#000;letter-spacing:0.16px;">[EXAMPLE - Replace with your data]</div>
<div class="t" style="left:678px;top:715.48px;font-size:14.5px;line-height:16.20px;color:#000;letter-spacing:0.16px;">Competence and Training</div>
<div class="r" style="left:665px;top:749px;width:8px;height:8px;background:#93A9CF;box-shadow:inset 0 0 0 1px rgba(0,0,0,0.08);"></div>
<div class="t" style="left:678px;top:745.68px;font-size:14.5px;line-height:16.20px;color:#000;letter-spacing:0.16px;">[EXAMPLE - Replace with your data]</div>
<div class="t" style="left:678px;top:765.68px;font-size:14.5px;line-height:16.20px;color:#000;letter-spacing:0.16px;">Operational Controls</div>
<div class="r" style="left:1895px;top:6px;width:26px;height:901px;background:#E6E6E6;"></div>
<div class="r" style="left:1898px;top:8px;width:19px;height:19px;background:#fff;border:1px solid #9A9A9A;box-sizing:border-box;"></div>
<svg class="r" style="left:1898px;top:8px" width="19" height="19"><polygon points="5,11 14,11 9.5,6" fill="#222"/></svg>
<div class="r" style="left:1898px;top:27px;width:19px;height:833px;background:#fff;border:1px solid #9A9A9A;box-sizing:border-box;"></div>
<div class="r" style="left:1898px;top:860px;width:19px;height:27px;background:#F2F2F2;"></div>
<div class="r" style="left:1898px;top:887px;width:19px;height:19px;background:#fff;border:1px solid #9A9A9A;box-sizing:border-box;"></div>
<svg class="r" style="left:1898px;top:887.5px" width="19" height="18"><polygon points="5,7 14,7 9.5,12" fill="#222"/></svg>
<div class="r" style="left:1894px;top:6px;width:1px;height:901px;background:#A0A0A0;"></div>
<div class="r" style="left:0px;top:903px;width:1894px;height:1px;background:#D9D9D9;"></div>
<div class="r" style="left:0px;top:906px;width:1895px;height:1px;background:#9C9C9C;"></div>
<div class="r" style="left:0px;top:907px;width:1921px;height:31px;background:#E6E6E6;"></div>
<div class="r" style="left:0px;top:938px;width:1921px;height:1px;background:#C6C6C6;"></div>
<div class="r" style="left:0px;top:939px;width:1921px;height:27px;background:#F3F3F3;"></div>
<div class="r" style="left:0px;top:965px;width:1921px;height:1px;background:#8C8C8C;"></div>
<svg class="r" style="left:25px;top:914px" width="50" height="18"><polygon points="11,3 11,13 5,8" fill="#BDBDBD"/><polygon points="37,3 37,13 43,8" fill="#BDBDBD"/></svg>
<div class="r" style="left:112px;top:910px;width:1px;height:23px;background:#A0A0A0;"></div>
<div class="r" style="left:114px;top:908px;width:114px;height:28px;background:#F4F2F2;"></div>
<div class="r" style="left:115px;top:909px;width:112px;height:26px;background:#203864;"></div>
<div class="t" style="left:-229px;width:800px;text-align:center;top:910.41px;font-size:17px;line-height:18.99px;color:#fff;">Instructions</div>
<div class="r" style="left:229px;top:904px;width:104px;height:31px;background:#fff;"></div>
<div class="r" style="left:229px;top:906px;width:1px;height:28px;background:#9A9A9A;"></div>
<div class="r" style="left:332px;top:906px;width:1px;height:28px;background:#9A9A9A;"></div>
<div class="r" style="left:232px;top:910px;width:98px;height:22px;background:linear-gradient(#FAFAF8 0%, #DDE2D8 45%, #A9B5A0 100%);"></div>
<div class="r" style="left:229px;top:933px;width:104px;height:2px;background:#1E7145;"></div>
<div class="t" style="left:-119.5px;width:800px;text-align:center;top:910.62px;font-size:17px;line-height:18.99px;color:#1E7145;font-weight:bold;transform:scaleX(0.94);transform-origin:50% 0;">Scorecard</div>
<div class="r" style="left:334px;top:908px;width:209px;height:28px;background:#F4F2F2;"></div>
<div class="r" style="left:335px;top:909px;width:207px;height:26px;background:#1F6B74;"></div>
<div class="t" style="left:38px;width:800px;text-align:center;top:910.41px;font-size:17px;line-height:18.99px;color:#fff;">Improvement_Priorities</div>
<div class="r" style="left:544px;top:910px;width:1px;height:23px;background:#A0A0A0;"></div>
<div class="r" style="left:546px;top:908px;width:201px;height:28px;background:#F4F2F2;"></div>
<div class="r" style="left:547px;top:909px;width:199px;height:26px;background:#C00000;"></div>
<div class="t" style="left:246px;width:800px;text-align:center;top:910.41px;font-size:17px;line-height:18.99px;color:#fff;transform:scaleX(0.94);transform-origin:50% 0;">Pro_Tips_and_Mistakes</div>
<div class="r" style="left:748px;top:910px;width:1px;height:23px;background:#A0A0A0;"></div>
<svg class="r" style="left:786px;top:912px" width="22" height="22"><circle cx="10.5" cy="10.5" r="9.5" fill="none" stroke="#777" stroke-width="1.2"/><path d="M10.5 5.5v10M5.5 10.5h10" stroke="#555" stroke-width="1.4"/></svg>
<svg class="r" style="left:1148px;top:914px" width="8" height="18"><rect x="2" y="2" width="3" height="3" fill="#A8A8A8"/><rect x="2" y="7" width="3" height="3" fill="#A8A8A8"/><rect x="2" y="12" width="3" height="3" fill="#A8A8A8"/></svg>
<div class="r" style="left:1170px;top:913px;width:723px;height:19px;background:#F0F0F0;"></div>
<div class="r" style="left:1170px;top:913px;width:19px;height:19px;background:#fff;border:1px solid #888;box-sizing:border-box;"></div>
<svg class="r" style="left:1170px;top:913px" width="19" height="19"><polygon points="11,5 11,14 6,9.5" fill="#222"/></svg>
<div class="r" style="left:1188px;top:913px;width:599px;height:19px;background:#fff;border:1px solid #888;box-sizing:border-box;"></div>
<div class="r" style="left:1873px;top:913px;width:19px;height:19px;background:#fff;border:1px solid #888;box-sizing:border-box;"></div>
<svg class="r" style="left:1873px;top:913px" width="19" height="19"><polygon points="8,5 8,14 13,9.5" fill="#222"/></svg>
<div class="t" style="left:14px;top:946.22px;font-size:12.8px;line-height:14.30px;color:#333;transform:scaleX(0.97);transform-origin:0 0;">Ready</div>
<svg class="r" style="left:70px;top:940px" width="24" height="24"><rect x="8.5" y="8.6" width="13" height="9.9" fill="#fff" stroke="#5A5A5A" stroke-width="1.1"/><rect x="15.2" y="5" width="6.8" height="3.7" fill="#5A5A5A"/><circle cx="10.4" cy="7.3" r="4.2" fill="#F3F3F3"/><circle cx="10.4" cy="7.3" r="3.3" fill="#5A5A5A"/><path d="M14.2 10.6h1.7M17.1 10.6h1.9M10.9 13.5h1.9M14 13.5h1.9M17.1 13.5h1.9M10.9 16.5h1.9M14 16.5h1.9M17.1 16.5h1.9" stroke="#5A5A5A" stroke-width="1.1"/></svg>
<svg class="r" style="left:110px;top:940px" width="28" height="26"><path d="M11.7 5.6 A7.3 7.3 0 0 0 12.5 19.7" fill="none" stroke="#444" stroke-width="1.1" stroke-dasharray="4 1.6"/><path d="M13.5 4.9v6.2" stroke="#444" stroke-width="1"/><path d="M11.3 10.3h4.5l-2.25 2.5z" fill="#444"/><path d="M16 10.4h1.6M18.3 10.4h1.6" stroke="#444" stroke-width="1"/><path d="M18.8 8.2l3.3 2.2-3.3 2.3z" fill="#444"/><path d="M15.6 21.5L24.2 13.8" stroke="#3A3A3A" stroke-width="1.7"/><path d="M15.4 13.8L24.6 21.7" stroke="#3A3A3A" stroke-width="1.3"/></svg>
<div class="t" style="left:138.5px;top:944.78px;font-size:13.5px;line-height:15.08px;color:#262626;font-weight:bold;letter-spacing:-0.36px;">Accessibility: Investigate</div>
<svg class="r" style="left:1405px;top:940px" width="28" height="24"><rect x="4" y="3" width="19" height="13" rx="1.6" fill="#484848"/><path d="M8.5 20.4h4" stroke="#484848" stroke-width="1.4"/><g transform="translate(17.3 16.3)"><circle r="6.2" fill="#F3F3F3"/><rect x="-1.3" y="-5.6" width="2.6" height="3" transform="rotate(0)" fill="#444"/><rect x="-1.3" y="-5.6" width="2.6" height="3" transform="rotate(45)" fill="#444"/><rect x="-1.3" y="-5.6" width="2.6" height="3" transform="rotate(90)" fill="#444"/><rect x="-1.3" y="-5.6" width="2.6" height="3" transform="rotate(135)" fill="#444"/><rect x="-1.3" y="-5.6" width="2.6" height="3" transform="rotate(180)" fill="#444"/><rect x="-1.3" y="-5.6" width="2.6" height="3" transform="rotate(225)" fill="#444"/><rect x="-1.3" y="-5.6" width="2.6" height="3" transform="rotate(270)" fill="#444"/><rect x="-1.3" y="-5.6" width="2.6" height="3" transform="rotate(315)" fill="#444"/><circle r="4" fill="#444"/><circle r="1.5" fill="#F3F3F3"/></g></svg>
<div class="t" style="left:1430px;top:944.78px;font-size:13.5px;line-height:15.08px;color:#262626;letter-spacing:-0.3px;">Display Settings</div>
<div class="r" style="left:1547px;top:939px;width:50px;height:27px;background:#C8C8C8;"></div>
<svg class="r" style="left:1560px;top:940px" width="24" height="24"><rect x="4.8" y="4.8" width="14.5" height="14.5" fill="none" stroke="#5E5E5E" stroke-width="1.6"/><path d="M9.6 4.8v14.5M14.5 4.8v14.5M4.8 9.6h14.5M4.8 14.5h14.5" stroke="#5E5E5E" stroke-width="1.6"/></svg>
<svg class="r" style="left:1610px;top:940px" width="24" height="24"><rect x="3.9" y="4.9" width="15.8" height="13.6" fill="none" stroke="#5E5E5E" stroke-width="1.5"/><rect x="7.9" y="6.9" width="7.6" height="9.6" fill="none" stroke="#5E5E5E" stroke-width="1.4"/><path d="M9.5 9.4h4.4M9.5 11.6h4.4M9.5 13.8h4.4" stroke="#5E5E5E" stroke-width="1.1"/></svg>
<svg class="r" style="left:1660px;top:940px" width="24" height="24"><rect x="3.8" y="4.8" width="15.6" height="14.6" fill="none" stroke="#5E5E5E" stroke-width="1.5"/><path d="M3.8 14.2h10.2V4.8M8.9 4.8v9.4" fill="none" stroke="#5E5E5E" stroke-width="1.5"/></svg>
<svg class="r" style="left:1700px;top:940px" width="165" height="24"><path d="M4 12.5h10" stroke="#333" stroke-width="1.2"/><path d="M20 12.4h125" stroke="#333" stroke-width="1.3"/><rect x="80" y="5" width="6" height="14" fill="#3A3A3A"/><path d="M151 12.5h10M156.5 8v9" stroke="#333" stroke-width="1.2"/></svg>
<div class="t" style="left:1108px;width:800px;text-align:right;top:944.78px;font-size:13.5px;line-height:15.08px;color:#505050;transform:scaleX(0.9);transform-origin:100% 0;">100%</div>
<div class="r" style="left:1920px;top:0px;width:1px;height:966px;background:#000;"></div>
</body></html>
